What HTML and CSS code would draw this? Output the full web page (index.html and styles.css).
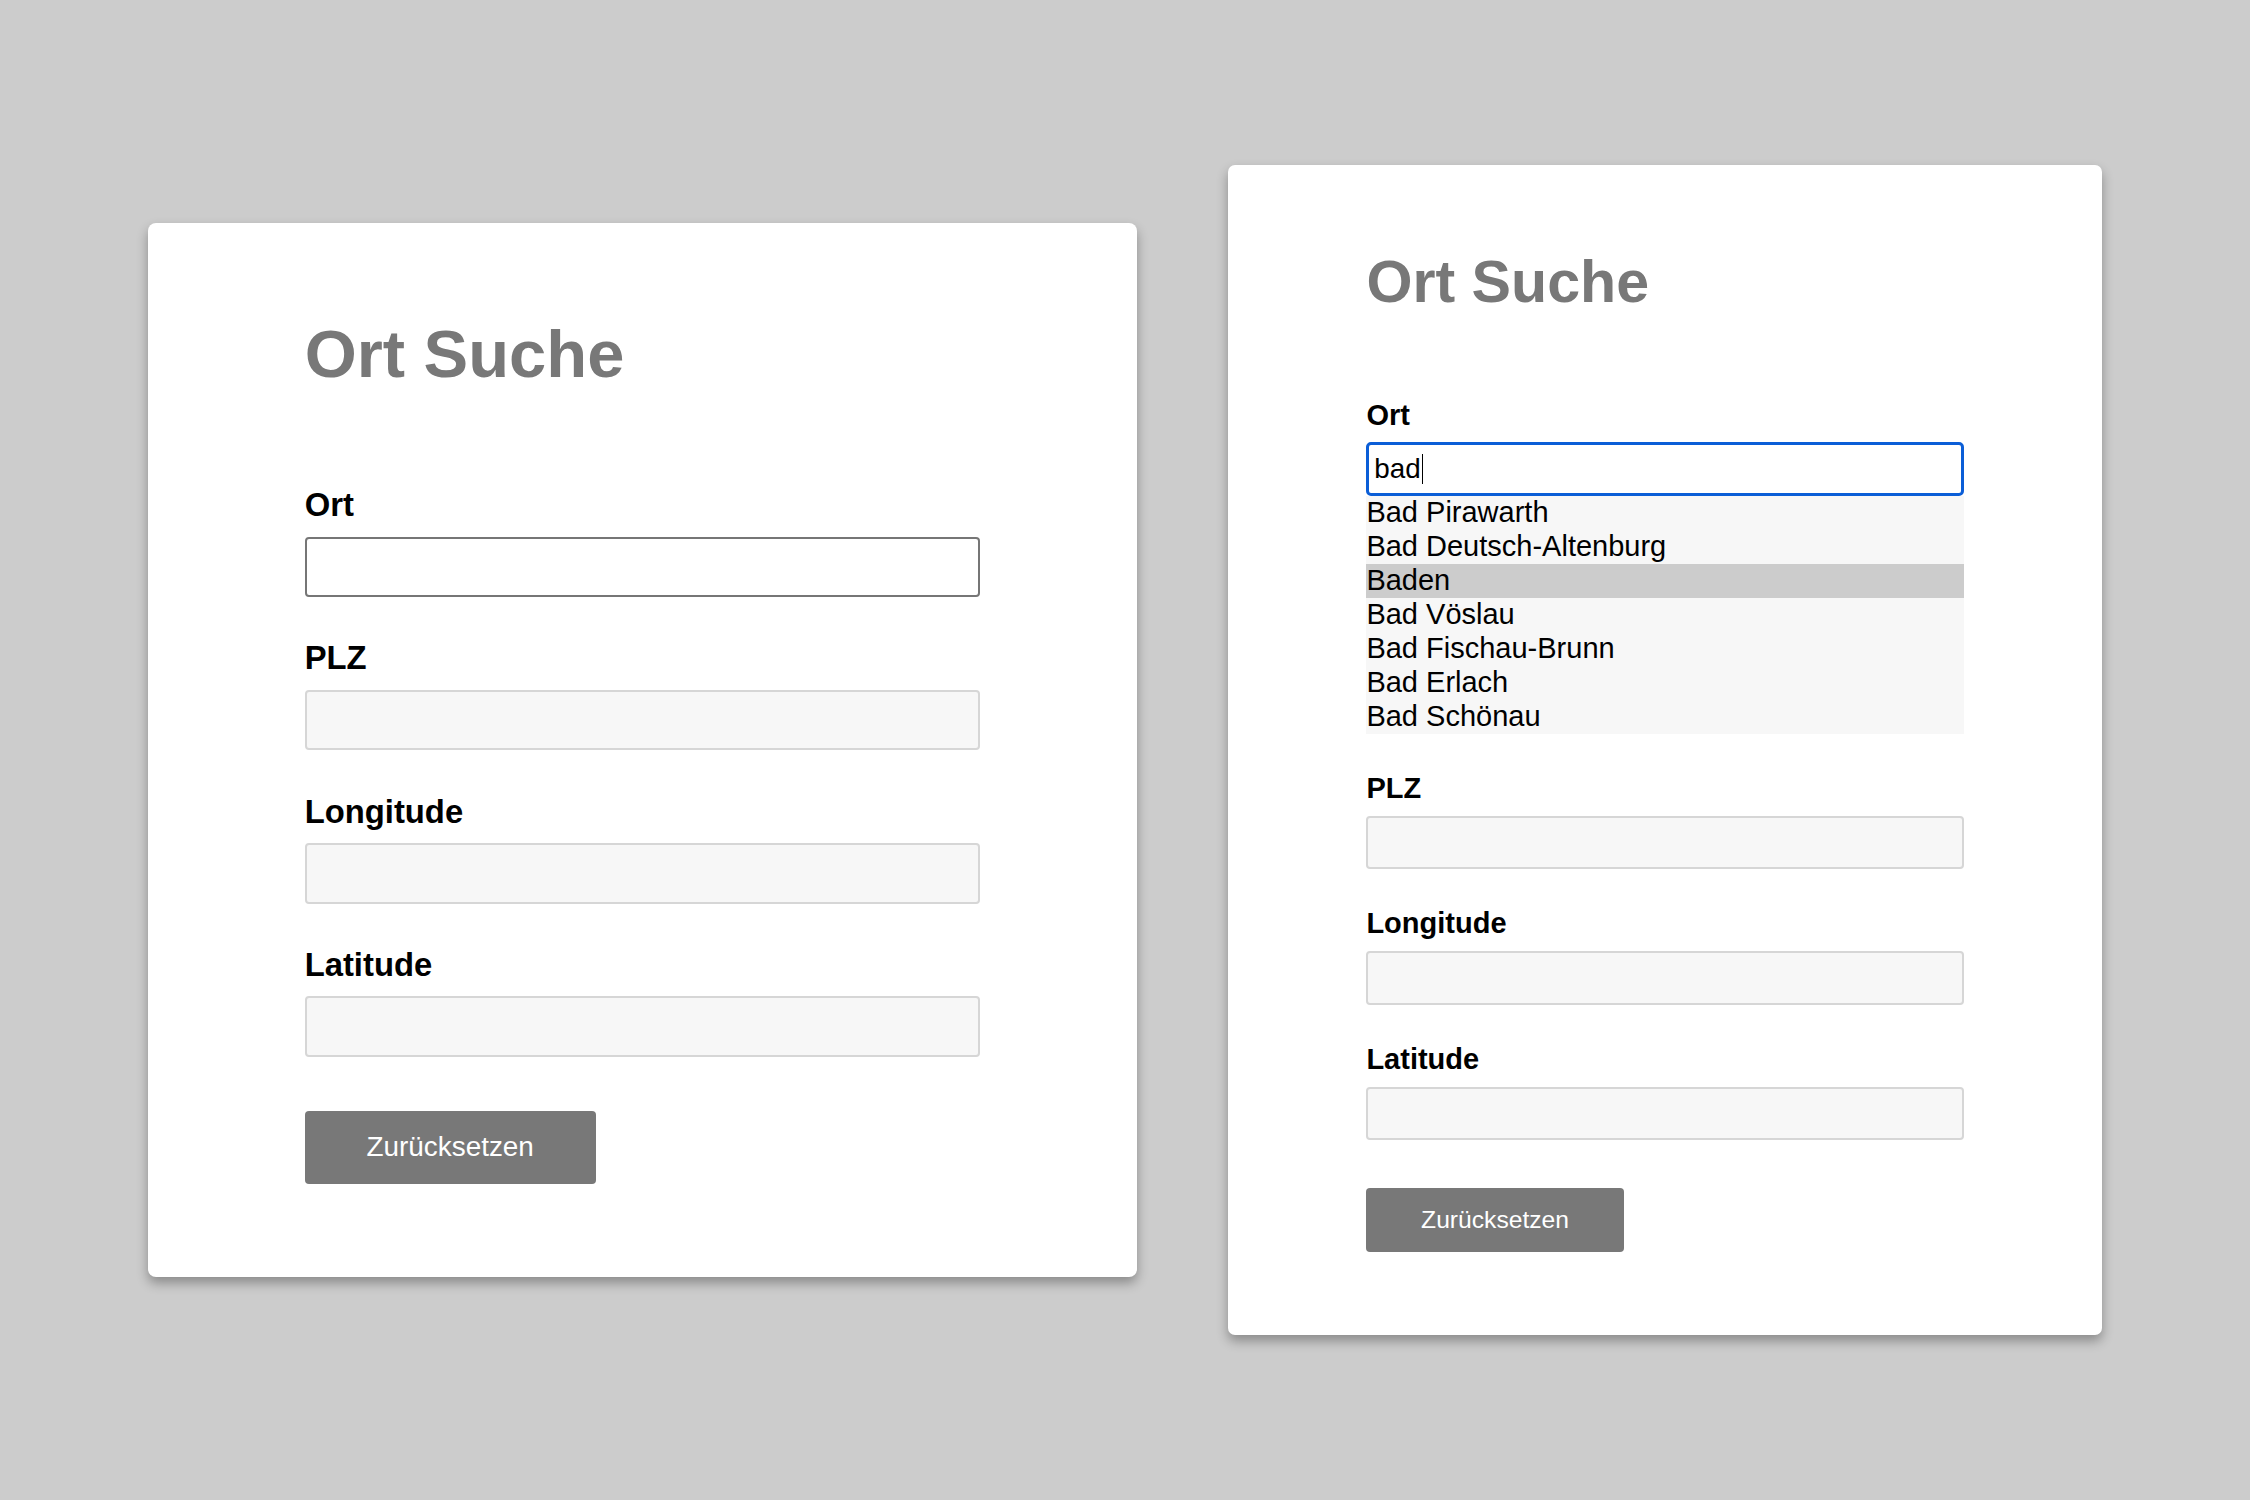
FILE: index.html
```html
<!DOCTYPE html>
<html lang="de">
<head>
<meta charset="utf-8">
<title>Ort Suche</title>
<link rel="stylesheet" href="styles.css">
</head>
<body>
<main class="stage">
  <section class="card card--large">
    <h1 class="title">Ort Suche</h1>
    <div class="field">
      <label class="label">Ort</label>
      <div class="input input--editable"></div>
    </div>
    <div class="field">
      <label class="label">PLZ</label>
      <div class="input input--readonly"></div>
    </div>
    <div class="field">
      <label class="label">Longitude</label>
      <div class="input input--readonly"></div>
    </div>
    <div class="field">
      <label class="label">Latitude</label>
      <div class="input input--readonly"></div>
    </div>
    <button class="btn" type="button">Zurücksetzen</button>
  </section>

  <section class="card card--small">
    <h1 class="title">Ort Suche</h1>
    <div class="field">
      <label class="label">Ort</label>
      <div class="input input--focus"><span class="value">bad</span><span class="caret"></span></div>
      <ul class="suggest">
        <li class="suggest__item">Bad Pirawarth</li>
        <li class="suggest__item">Bad Deutsch-Altenburg</li>
        <li class="suggest__item suggest__item--active">Baden</li>
        <li class="suggest__item">Bad Vöslau</li>
        <li class="suggest__item">Bad Fischau-Brunn</li>
        <li class="suggest__item">Bad Erlach</li>
        <li class="suggest__item">Bad Schönau</li>
      </ul>
    </div>
    <div class="field">
      <label class="label">PLZ</label>
      <div class="input input--readonly"></div>
    </div>
    <div class="field">
      <label class="label">Longitude</label>
      <div class="input input--readonly"></div>
    </div>
    <div class="field">
      <label class="label">Latitude</label>
      <div class="input input--readonly"></div>
    </div>
    <button class="btn" type="button">Zurücksetzen</button>
  </section>
</main>
</body>
</html>
```

FILE: styles.css
```css
* {
  box-sizing: border-box;
}

html, body {
  margin: 0;
  padding: 0;
}

body {
  background: #cccccc;
  font-family: "Liberation Sans", Arial, Helvetica, sans-serif;
  color: #000;
}

.stage {
  height: 100vh;
  display: flex;
  align-items: center;
  justify-content: center;
  gap: 91px;
}

.card {
  width: 30.15em;
  background: #ffffff;
  border-radius: 8px;
  padding: 3.0em 4.78em 2.86em;
  box-shadow: 0 6px 12px rgba(0, 0, 0, 0.32);
  display: flex;
  flex-direction: column;
}

.card--large {
  font-size: 32.8px;
}

.card--small {
  font-size: 29px;
  border-radius: 7px;
}

.title {
  margin: 0;
  margin-bottom: calc(3.09em / 2.04);
  font-size: 2.04em;
  line-height: 1;
  font-weight: 700;
  color: #787878;
}

.field {
  display: flex;
  flex-direction: column;
}

.field + .field {
  margin-top: 1.38em;
}

.label {
  display: block;
  font-weight: 700;
  font-size: 1em;
  line-height: 1;
  margin-bottom: 0.4465em;
}

.input {
  width: 100%;
  height: 1.845em;
  border-radius: 4px;
  display: flex;
  align-items: center;
  padding: 0 0.17em;
}

.input--editable {
  background: #ffffff;
  border: 2px solid #767676;
}

.input--readonly {
  background: #f7f7f7;
  border: 2px solid #d6d6d6;
}

.input--focus {
  background: #ffffff;
  border: 3px solid #0b5ed7;
  border-radius: 5px;
}

.value {
  font-size: 0.96em;
  line-height: 1;
}

.caret {
  display: inline-block;
  width: 1.5px;
  height: 1.05em;
  background: #000;
  margin-left: 1px;
}

.suggest {
  list-style: none;
  margin: 0;
  padding: 0;
  background: #f7f7f7;
}

.suggest__item {
  font-size: 1em;
  line-height: 1.172em;
  height: 1.172em;
  white-space: nowrap;
}

.suggest__item--active {
  background: #cccccc;
}

.btn {
  align-self: flex-start;
  margin-top: calc(1.64em / 0.85);
  font-size: 0.85em;
  width: 10.44em;
  height: 2.62em;
  background: #787878;
  color: #ffffff;
  border: none;
  border-radius: 4px;
  font-family: "Liberation Sans", Arial, Helvetica, sans-serif;
  padding: 0;
  cursor: pointer;
}
```
